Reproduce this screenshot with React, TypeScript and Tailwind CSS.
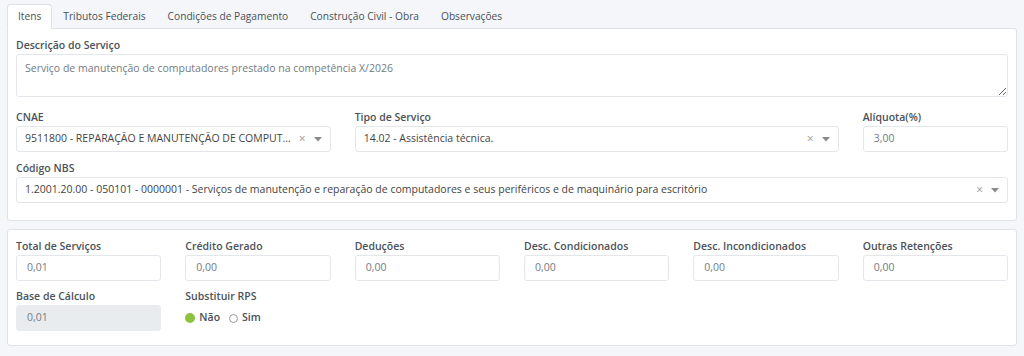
import React from "react";

const tabs = ["Itens", "Tributos Federais", "Condições de Pagamento", "Construção Civil - Obra", "Observações"];

function Label({ children }: { children: React.ReactNode }) {
  return <label className="block text-[10.5px] leading-[17px] font-semibold text-[#4b5259]">{children}</label>;
}

function Caret() {
  return (
    <svg width="8" height="5" viewBox="0 0 8 5" className="ml-[8px] shrink-0">
      <path d="M0 0 L8 0 L4 4.5 Z" fill="#8a8a8a" />
    </svg>
  );
}

function Select({ value }: { value: string }) {
  return (
    <div className="flex items-center h-[26px] border border-[#e3e6ea] rounded-[3px] bg-white pl-[8px] pr-[8px]">
      <span className="flex-1 whitespace-nowrap overflow-hidden text-[10.5px] text-[#444]">{value}</span>
      <span className="ml-[6px] text-[12px] text-[#9a9a9a] leading-none">×</span>
      <Caret />
    </div>
  );
}

function NumField({ label, value, disabled }: { label: string; value: string; disabled?: boolean }) {
  return (
    <div className="col-span-2">
      <Label>{label}</Label>
      <div
        className={`flex items-center h-[26px] border rounded-[3px] px-[10px] text-[10.5px] text-[#737b83] ${
          disabled ? "bg-[#e9ecef] border-[#e9ecef]" : "bg-white border-[#e3e6ea]"
        }`}
      >
        {value}
      </div>
    </div>
  );
}

export default function App() {
  return (
    <div className="min-h-screen bg-[#f4f6f9] px-[7px] pt-[4px] font-['Open_Sans',sans-serif]">
      <div className="flex h-[25px] -mb-px">
        {tabs.map((t, i) => (
          <div
            key={t}
            className={`flex items-center px-[10px] text-[10.2px] text-[#495057] ${
              i === 0 ? "bg-white border border-[#dee2e6] border-b-white rounded-t-[4px] relative z-10" : "border border-transparent"
            }`}
          >
            {t}
          </div>
        ))}
      </div>

      <div className="bg-white border border-[#dee2e6] rounded-b-[3px] rounded-tr-[3px] px-[8px] pt-[8px] pb-[17px]">
        <Label>Descrição do Serviço</Label>
        <textarea
          readOnly
          defaultValue="Serviço de manutenção de computadores prestado na competência X/2026"
          className="block w-full h-[43px] border border-[#e3e6ea] rounded-[3px] px-[8px] pt-[6px] text-[10.5px] text-[#737b83] outline-none resize-y"
        />
        <div className="grid grid-cols-12 gap-x-[24px] mt-[12px]">
          <div className="col-span-4">
            <Label>CNAE</Label>
            <Select value="9511800 - REPARAÇÃO E MANUTENÇÃO DE COMPUT..." />
          </div>
          <div className="col-span-6">
            <Label>Tipo de Serviço</Label>
            <Select value="14.02 - Assistência técnica." />
          </div>
          <NumField label="Alíquota(%)" value="3,00" />
        </div>
        <div className="mt-[8px]">
          <Label>Código NBS</Label>
          <Select value="1.2001.20.00 - 050101 - 0000001 - Serviços de manutenção e reparação de computadores e seus periféricos e de maquinário para escritório" />
        </div>
      </div>

      <div className="mt-[8px] bg-white border border-[#dee2e6] rounded-[3px] px-[8px] pt-[8px] pb-[14px]">
        <div className="grid grid-cols-12 gap-x-[24px] gap-y-[7px]">
          <NumField label="Total de Serviços" value="0,01" />
          <NumField label="Crédito Gerado" value="0,00" />
          <NumField label="Deduções" value="0,00" />
          <NumField label="Desc. Condicionados" value="0,00" />
          <NumField label="Desc. Incondicionados" value="0,00" />
          <NumField label="Outras Retenções" value="0,00" />
          <NumField label="Base de Cálculo" value="0,01" disabled />
          <div className="col-span-2">
            <Label>Substituir RPS</Label>
            <div className="flex items-center h-[26px] text-[10.5px] font-semibold text-[#495057]">
              <span className="w-[10px] h-[10px] rounded-full bg-[#8dc33f] mr-[4px]" />
              <span>Não</span>
              <span className="w-[9px] h-[9px] rounded-full border border-[#999] ml-[9px] mr-[4px]" />
              <span>Sim</span>
            </div>
          </div>
        </div>
      </div>
    </div>
  );
}
